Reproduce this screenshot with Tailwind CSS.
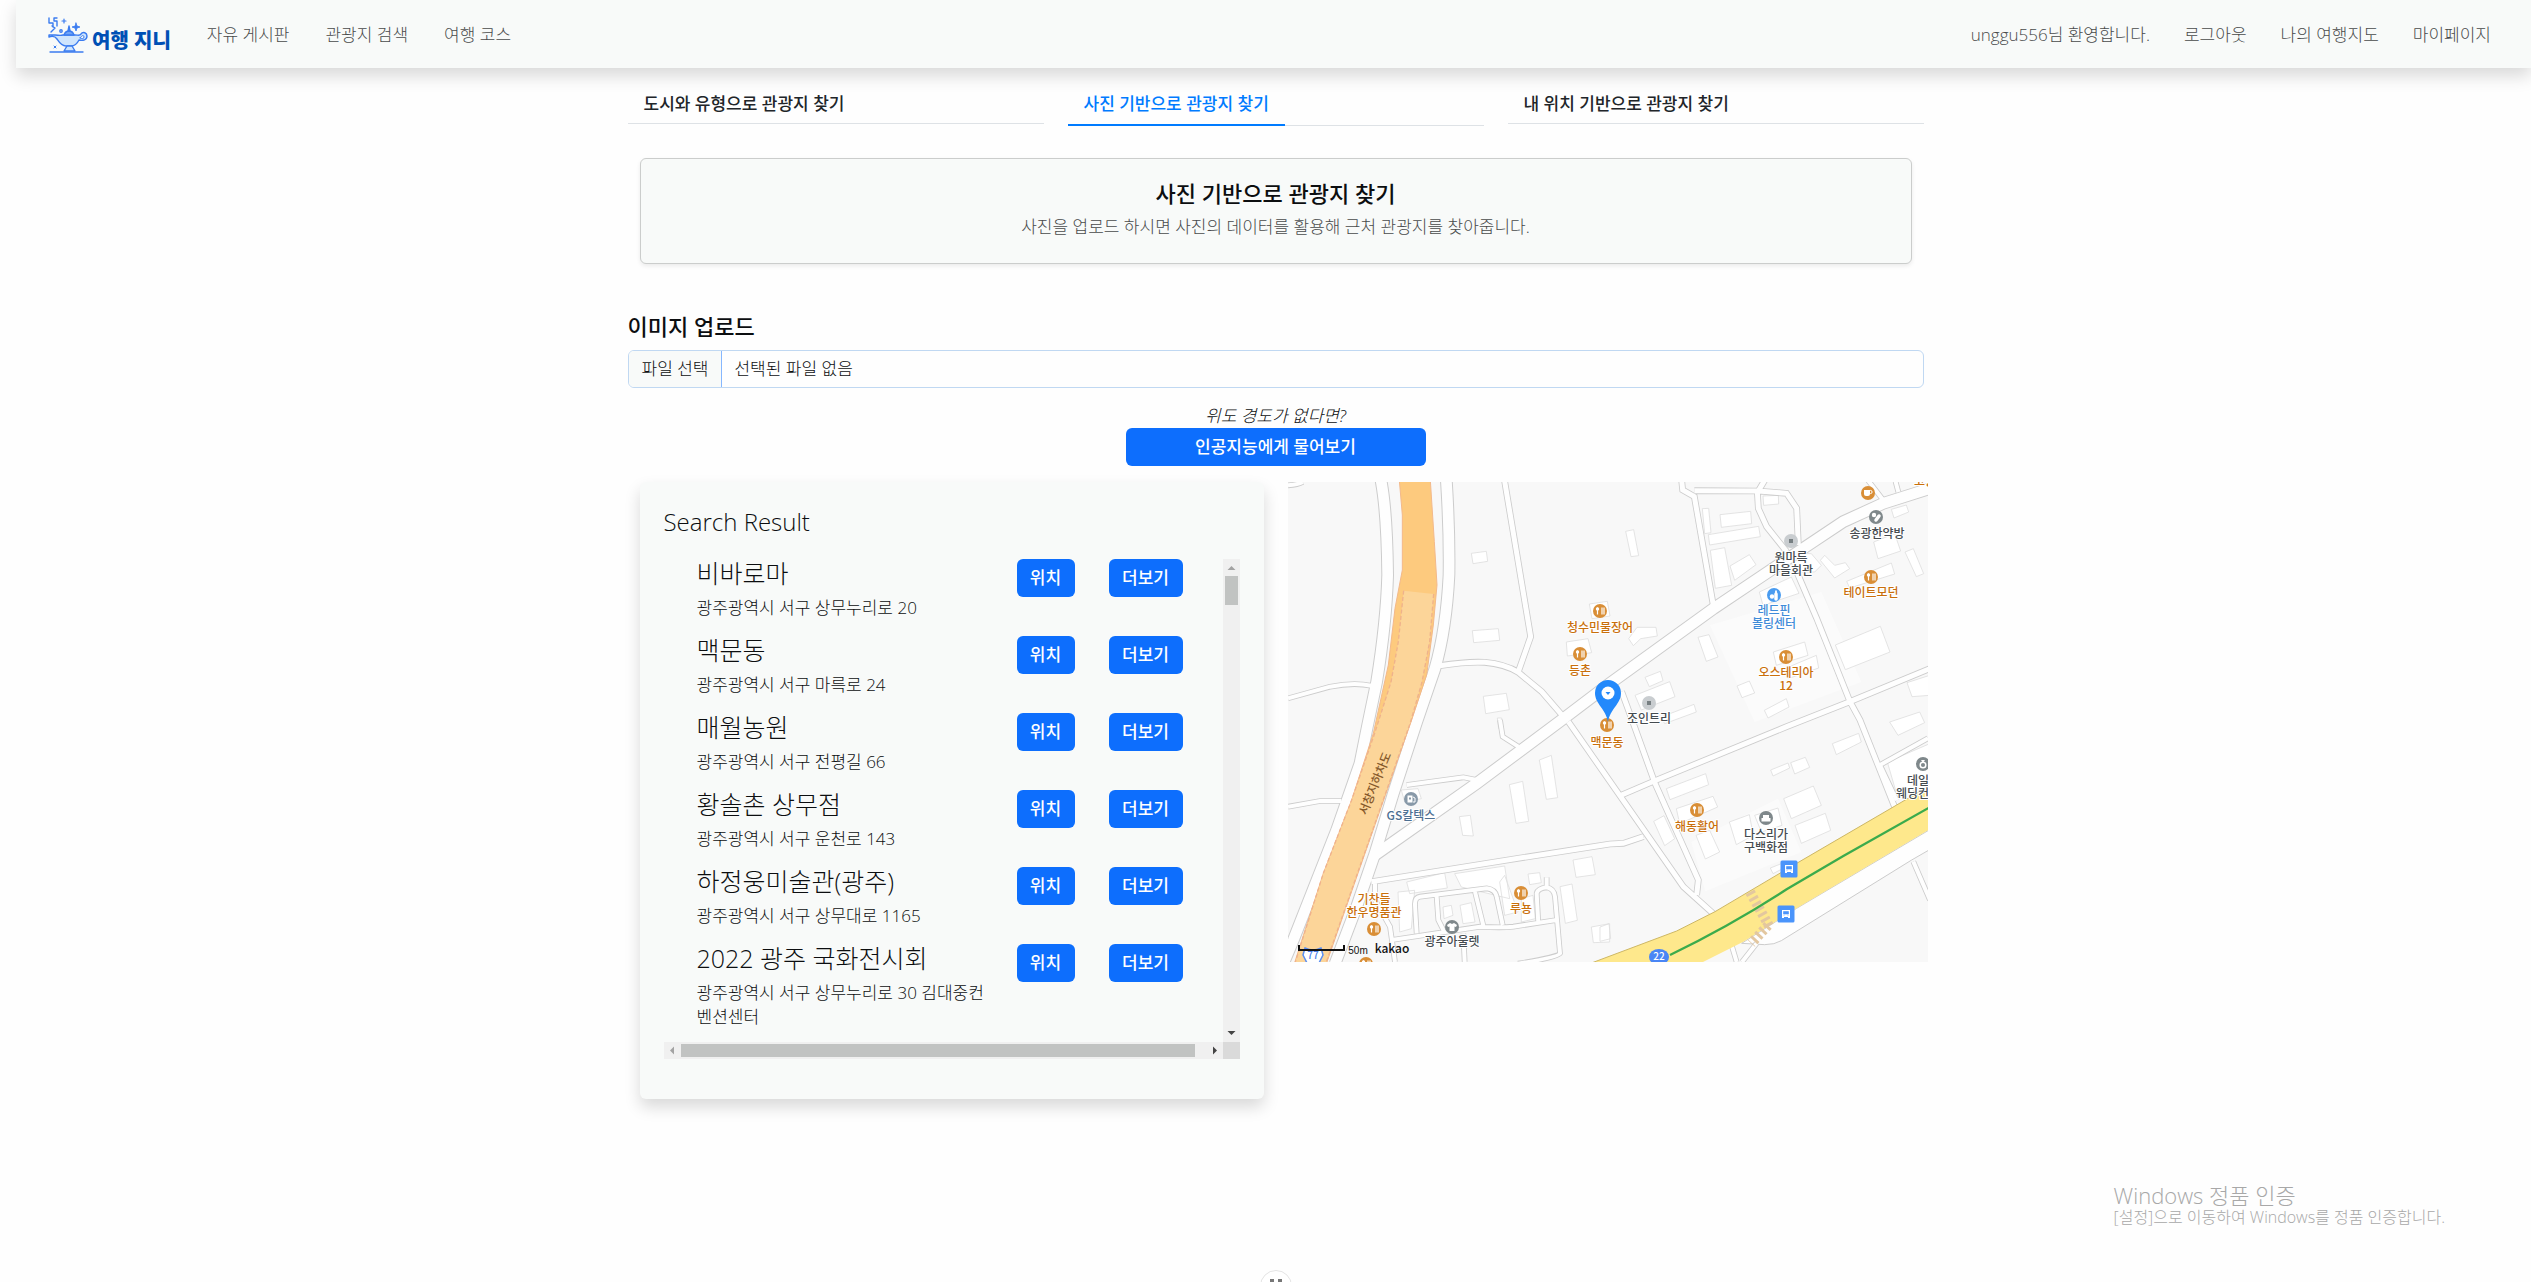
<!DOCTYPE html>
<html lang="ko">
<head>
<meta charset="utf-8">
<title>여행 지니</title>
<script src="https://cdn.jsdelivr.net/npm/@tailwindcss/browser@4"></script>
</head>
<body class="relative min-h-screen overflow-x-hidden bg-[#fefefe] pl-4 font-['Open_Sans','Noto_Sans_CJK_KR',sans-serif] text-[17px] leading-6 font-light text-[#0c0e10]">

<header class="flex h-[68px] items-center justify-between bg-[#f8faf9] pt-0.5 pr-10 pl-8 shadow-[0_8px_16px_rgba(0,0,0,0.15)]">
  <nav class="flex items-center gap-9 text-[#484a4b]">
    <a href="#" class="flex items-end gap-1 text-[#0050b5]">
      <svg class="h-9 w-10" viewBox="0 0 40 36" fill="none" stroke="#3b7cf0" stroke-width="1.4" stroke-linejoin="round" stroke-linecap="round">
        <path d="M1 1v5h4v4M9 1H6v3h3v5M3 15l4-4-3-2"/>
        <path d="M16 2v4M14 4h4" stroke-width="1.2"/>
        <path d="M28 6l1 3 3 1-3 1-1 3-1-3-3-1 3-1z" fill="#3b7cf0" stroke-width=".8"/>
        <circle cx="13" cy="14" r="1.200"/>
        <path d="M1 18h6c3 0 5 1 8 0h12c3 0 5 1 6-1 2-3 6-1 6 2 0 4-4 5-8 4-2 4-5 6-8 6h-5c-5 0-7-4-9-7-2-3-5-3-8-2z" fill="#cfe5fd"/>
        <path d="M33 20c1-2 3-2 3 0s-2 2-4 1z" fill="#f8faf9" stroke-width="1"/>
        <path d="M16 18c1-3 3-4 5-4s4 1 5 4z" fill="#6fa3f6"/>
        <path d="M20 14l1-5 1 5z"/>
        <path d="M19 29l-3 5h11l-3-5z" fill="#cfe5fd"/>
        <path d="M2 35h33"/>
        <path d="M6 29l2 2M8 29l-2 2" stroke-width="1"/>
      </svg>
      <span class="text-[20px] leading-6 font-black">여행 지니</span>
    </a>
    <a href="#">자유 게시판</a>
    <a href="#">관광지 검색</a>
    <a href="#">여행 코스</a>
  </nav>
  <nav class="flex items-center gap-[34px] text-[#484a4b]">
    <span>unggu556님 환영합니다.</span>
    <a href="#">로그아웃</a>
    <a href="#">나의 여행지도</a>
    <a href="#">마이페이지</a>
  </nav>
</header>

<main class="mx-auto w-full max-w-[1296px] translate-x-0.5 pt-6">
  <nav class="grid grid-cols-3 items-start gap-6 font-medium text-[#212529]">
    <div class="flex border-b border-[#dee2e6]"><a href="#" class="px-4 pb-[7px]">도시와 유형으로 관광지 찾기</a></div>
    <div class="flex border-b border-[#dee2e6]"><a href="#" class="-mb-px border-b-2 border-[#007bff] px-4 pb-2 text-[#007bff]">사진 기반으로 관광지 찾기</a></div>
    <div class="flex border-b border-[#dee2e6]"><a href="#" class="px-4 pb-[7px]">내 위치 기반으로 관광지 찾기</a></div>
  </nav>

  <section class="mx-3 mt-8 flex h-[106px] flex-col items-center gap-2 rounded-md border border-[#cbcdcc] bg-[#f8faf9] pt-5 shadow-[0_2px_4px_rgba(0,0,0,0.08)]">
    <h1 class="text-[22px] leading-7 font-medium">사진 기반으로 관광지 찾기</h1>
    <p class="text-[#484a4b]">사진을 업로드 하시면 사진의 데이터를 활용해 근처 관광지를 찾아줍니다.</p>
  </section>

  <section class="pt-12">
    <label for="photo" class="block text-[22px] leading-7 font-medium">이미지 업로드</label>
    <div class="relative mt-2.5 flex h-[38px] items-center overflow-hidden rounded-md border border-[#c0d8f2]">
      <span class="flex h-full items-center border-r border-[#86b7fe] bg-[#f8faf9] px-[13px]">파일 선택</span>
      <span class="px-3">선택된 파일 없음</span>
      <input id="photo" type="file" class="absolute inset-0 opacity-0">
    </div>
    <div class="mt-4 flex flex-col items-center">
      <em>위도 경도가 없다면?</em>
      <button type="button" class="h-[38px] w-[300px] rounded-md bg-[#0d6efd] font-medium text-white">인공지능에게 물어보기</button>
    </div>
  </section>

  <div class="-mr-1 ml-3 mt-4 flex items-start gap-6">
    <section class="h-[617px] min-w-0 flex-1 rounded-md bg-[#f8faf9] px-6 pt-6 shadow-[0_8px_16px_rgba(0,0,0,0.15)]">
      <h2 class="text-2xl leading-8">Search Result</h2>
      <div class="mt-[21px] grid h-[500px] grid-cols-[1fr_17px] grid-rows-[1fr_17px]">
        <ul class="flex flex-col gap-4 pl-[33px]">
          <li class="flex items-start">
            <div class="mr-6 w-[296px]"><h3 class="mb-2 text-[25px] leading-[29px]">비바로마</h3><p>광주광역시 서구 상무누리로 20</p></div>
            <button type="button" class="mr-[34px] h-[38px] w-[58px] rounded-md bg-[#0d6efd] font-medium text-white">위치</button>
            <button type="button" class="h-[38px] w-[74px] rounded-md bg-[#0d6efd] font-medium text-white">더보기</button>
          </li>
          <li class="flex items-start">
            <div class="mr-6 w-[296px]"><h3 class="mb-2 text-[25px] leading-[29px]">맥문동</h3><p>광주광역시 서구 마륵로 24</p></div>
            <button type="button" class="mr-[34px] h-[38px] w-[58px] rounded-md bg-[#0d6efd] font-medium text-white">위치</button>
            <button type="button" class="h-[38px] w-[74px] rounded-md bg-[#0d6efd] font-medium text-white">더보기</button>
          </li>
          <li class="flex items-start">
            <div class="mr-6 w-[296px]"><h3 class="mb-2 text-[25px] leading-[29px]">매월농원</h3><p>광주광역시 서구 전평길 66</p></div>
            <button type="button" class="mr-[34px] h-[38px] w-[58px] rounded-md bg-[#0d6efd] font-medium text-white">위치</button>
            <button type="button" class="h-[38px] w-[74px] rounded-md bg-[#0d6efd] font-medium text-white">더보기</button>
          </li>
          <li class="flex items-start">
            <div class="mr-6 w-[296px]"><h3 class="mb-2 text-[25px] leading-[29px]">황솔촌 상무점</h3><p>광주광역시 서구 운천로 143</p></div>
            <button type="button" class="mr-[34px] h-[38px] w-[58px] rounded-md bg-[#0d6efd] font-medium text-white">위치</button>
            <button type="button" class="h-[38px] w-[74px] rounded-md bg-[#0d6efd] font-medium text-white">더보기</button>
          </li>
          <li class="flex items-start">
            <div class="mr-6 w-[296px]"><h3 class="mb-2 text-[25px] leading-[29px]">하정웅미술관(광주)</h3><p>광주광역시 서구 상무대로 1165</p></div>
            <button type="button" class="mr-[34px] h-[38px] w-[58px] rounded-md bg-[#0d6efd] font-medium text-white">위치</button>
            <button type="button" class="h-[38px] w-[74px] rounded-md bg-[#0d6efd] font-medium text-white">더보기</button>
          </li>
          <li class="flex items-start">
            <div class="mr-6 w-[296px]"><h3 class="mb-2 text-[25px] leading-[29px]">2022 광주 국화전시회</h3><p>광주광역시 서구 상무누리로 30 김대중컨벤션센터</p></div>
            <button type="button" class="mr-[34px] h-[38px] w-[58px] rounded-md bg-[#0d6efd] font-medium text-white">위치</button>
            <button type="button" class="h-[38px] w-[74px] rounded-md bg-[#0d6efd] font-medium text-white">더보기</button>
          </li>
        </ul>
        <div class="flex flex-col items-center justify-between bg-[#f0f0f0]">
          <div class="flex flex-col items-center">
            <svg class="h-[17px] w-[17px]" viewBox="0 0 17 17" fill="#a3a3a3"><path d="M4.500 11h8l-4-4z"/></svg>
            <div class="h-[29px] w-[13px] bg-[#c1c3c2]"></div>
          </div>
          <svg class="h-[17px] w-[17px]" viewBox="0 0 17 17" fill="#444"><path d="M4.500 6h8l-4 4z"/></svg>
        </div>
        <div class="flex items-center justify-between bg-[#f0f0f0]">
          <div class="flex min-w-0 flex-1 items-center">
            <svg class="h-[17px] w-[17px]" viewBox="0 0 17 17" fill="#a3a3a3"><path d="M10 4.500v8l-4-4z"/></svg>
            <div class="h-[13px] w-[514px] bg-[#c1c3c2]"></div>
          </div>
          <svg class="h-[17px] w-[17px]" viewBox="0 0 17 17" fill="#444"><path d="M7 4.500v8l4-4z"/></svg>
        </div>
        <div class="bg-[#dadada]"></div>
      </div>
    </section>

    <section class="relative h-[480px] w-[640px] shrink-0 overflow-hidden bg-[#f8f8f8]" aria-label="지도">
      <svg class="absolute inset-0 h-full w-full" viewBox="0 0 1920 1440" fill="none">
        <defs>
          <g id="narrow">
            <path d="M0 649 126 614Q196 600 250 611M0 974 96 957H160"/>
            <path d="M356 909 526 886 566 894M636 714 644 764 691 794"/>
            <path d="M386 1354 381 1269Q380 1246 396 1244L596 1219Q622 1222 626 1244L644 1329M311 1374 576 1334Q640 1338 676 1334L806 1314M446 1244 451 1314 471 1354M561 1229 588 1339M751 1324 746 1234Q750 1219 776 1216 798 1220 801 1244L816 1414Q812 1425 690 1445M261 1204V1254L306 1334 321 1440M526 1354 530 1440M776 1218V1186"/>
            <path d="M0 10Q30 8 44 0M1822-4 1831 30M1740-5 1790 60"/>
            <path d="M1776 849 1920 769M1776 849 1826 955M1876 1139 1926 1254M1331 1390 1346 1440M1406 1384 1362 1440"/>
          </g>
          <g id="medium">
            <path d="M650-2 728 464 691 569M455 551Q540 538 590 541 650 546 691 571L761 629 826 704"/>
            <path d="M1181-5 1184 24 1219 44 1276 370M1219 26 1411 27 1496 34 1526 79 1531 189M1411 27 1430-5M1408 29 1411 79 1436 134 1496 209"/>
            <path d="M1526 269 1586 409 1686 659 1716 714 1822 980M1925 560 1686 659 1496 734 1106 894 1001 939"/>
            <path d="M841 719 1186 1214 1286 1304M1001 629 1036 724 1101 904 1231 1194 1226 1239M250 1199 626 1139 966 1086 1006 1084 1066 1064"/>
          </g>
          <g id="wide">
            <path d="M279-5Q297 90 299 279 295 420 266 599L238 734 216 844 146 1044 16 1374-14 1445"/>
            <path d="M475-5Q485 150 483 279 475 440 441 559L386 720 316 934 261 1114 206 1274 141 1445"/>
            <path d="M1925 20 1786 64 1666 119 1546 199 1276 380 966 604 821 714 566 904 261 1119"/>
          </g>
        </defs>
        <path d="M1266 430 1600 330 1720 600 1400 720ZM1210 1080 1470 950 1540 1110 1252 1228Z" fill="#fbfbfb"/>
        <!-- building footprints -->
        <g fill="#fff" stroke="#dedede" stroke-width="2.500">
          <path d="M550 214 595 208 599 238 555 245ZM553 446 631 440 635 475 557 482ZM586 643 655 634 664 683 593 695ZM904 366 958 358 966 402 912 410ZM835 480 900 470 911 512 838 522ZM628 708 641 708 645 740 632 740Z"/>
          <path d="M1013 148 1037 143 1052 221 1029 224ZM1243 80 1262 79 1269 152 1250 155ZM1296 98 1388 88 1391 125 1300 136ZM1261 158 1412 133 1417 164 1265 189ZM1267 205 1310 197 1331 310 1282 319ZM1326 252 1384 218 1404 248 1340 295ZM1425 42 1471 40 1472 66 1427 70ZM1810 82 1855 69 1862 90 1818 108ZM1851 210 1876 200 1907 275 1885 284ZM1757 180 1820 155 1838 207 1770 230ZM1676 298 1810 243 1820 276 1685 318ZM1597 235 1610 220 1640 250 1672 242 1685 260 1640 288ZM1500 215 1570 215 1600 250 1580 270 1520 270Z"/>
          <path d="M1642 489 1777 433 1806 510 1672 563ZM1414 330 1510 285 1533 334 1425 370ZM1456 510 1550 480 1560 520 1465 550ZM1490 560 1585 520 1592 558 1500 590ZM1230 466 1263 458 1290 525 1255 538ZM1022 470 1047 436 1104 436 1108 462 1058 470 1036 491ZM1071 586 1117 568 1125 596 1084 614ZM1041 640 1145 599 1161 644 1060 684ZM1120 705 1218 667 1225 690 1130 725ZM1347 612 1384 597 1400 633 1362 647ZM1429 685 1495 650 1503 675 1440 708ZM1857 602 1925 580V640L1872 644ZM1805 720 1895 690 1910 722 1830 760Z"/>
          <path d="M754 834 790 820 809 947 775 952ZM664 908 704 898 722 1018 684 1024ZM514 1004 547 1000 556 1062 524 1060ZM340 924 390 920 400 950 350 960ZM356 1200 470 1172 478 1218 365 1235ZM500 1175 650 1152 665 1250 520 1215ZM330 1230 380 1225 370 1340 335 1350ZM650 1180 690 1290 650 1300 635 1200ZM720 1176 755 1172 760 1202 725 1208ZM855 1134 912 1124 922 1178 864 1186ZM816 1214 852 1206 868 1315 832 1324ZM910 1335 965 1325V1380L916 1382ZM700 1250 735 1240 742 1310 700 1320ZM465 1275 490 1270 495 1300 468 1310ZM516 1270 550 1262 561 1320 525 1325ZM936 1335 963 1325 968 1370 936 1378Z"/>
          <path d="M1135 920 1253 875 1262 908 1146 953ZM1165 980 1275 943 1289 975 1175 1025ZM1097 1018 1128 1001 1160 1070 1130 1091ZM1224 1060 1265 1045 1295 1110 1252 1131ZM1324 1020 1384 998 1396 1060 1345 1088ZM1400 1000 1470 978 1482 1030 1420 1050ZM1487 950 1576 912 1600 970 1510 1010ZM1521 1030 1612 994 1628 1045 1540 1084ZM1448 864 1500 843 1505 858 1455 882ZM1508 842 1552 826 1565 856 1520 876ZM1633 785 1712 754 1720 780 1645 818ZM1798 840 1925 785V900L1830 950ZM1447 1158 1480 1145 1484 1160 1455 1175Z"/>
        </g>
        <path d="M1930 1040 1526 1279 1361 1384 1430 1388Q1460 1388 1480 1376L1871 1134 1930 1100" fill="#fefefe" stroke="#ccc" stroke-width="3"/>
        <g stroke="#ccc"><use href="#narrow" stroke-width="17"/><use href="#medium" stroke-width="20"/><use href="#wide" stroke-width="38"/></g>
        <g stroke="#fefefe"><use href="#narrow" stroke-width="12"/><use href="#medium" stroke-width="15"/><use href="#wide" stroke-width="32"/></g>
        <!-- expressway -->
        <path d="M334-5 343 99V264L321 379 301 549 256 754 191 954 106 1174 19 1445H115L371 714 416 579 436 429 447 309 439 179 427-5Z" fill="#fdca7e" stroke="#f3b98a" stroke-width="3"/>
        <path d="M347 326 437 336 425 479 402 600 367 722 115 1440H22L106 1174 191 954 260 754 309 600 331 479Z" fill="#fcd599"/>
        <path d="M347 326 331 479 309 600 260 754 191 954 106 1174 22 1440M437 336 425 479 402 600 367 722 115 1440" stroke="#efb28c" stroke-width="4" stroke-dasharray="12 7"/>
        <!-- boulevard and metro line -->
        <path d="M905 1445 1166 1347 1281 1289 1526 1144 1826 969 1925 911V1042L1526 1279 1366 1379 1235 1445Z" fill="#fee88c"/>
        <path d="M905 1445 1166 1347 1281 1289 1526 1144 1826 969 1925 911" stroke="#cdb765" stroke-width="3"/>
        <path d="M1386 1230 1445 1335M1440 1330 1390 1384" stroke="#e3c79f" stroke-width="30" stroke-dasharray="9 9"/>
        <path d="M1925 976 1666 1122 1496 1222Q1330 1330 1146 1419" stroke="#3bab4c" stroke-width="7"/>
      </svg>

      <svg class="absolute inset-0 h-full w-full font-['Noto_Sans_CJK_KR',sans-serif] text-xs font-medium" viewBox="0 0 640 480" text-anchor="middle">
        <defs>
          <g id="food"><circle r="7" fill="#d98e36"/><path d="M-2.500-3.500v7M2-3.500v7M4-3.500v7" stroke="#fff" stroke-width="1.200"/><circle cx="-2.500" cy="-2" r="1.700" fill="#fff"/></g>
          <g id="spot"><circle r="7" fill="#c9cdd0"/><rect x="-2" y="-2" width="4" height="4" fill="#777f82"/></g>
          <g id="bus"><rect x="-8.500" y="-8.500" width="17" height="17" rx="1.500" fill="#4a94fb"/><path d="M-4-4h8v8h-2v-1h-4v1h-2z" fill="#fff"/><path d="M-2.500-2.500h5v2.500h-5zM-2.500 1.200h1M1.500 1.200h1" fill="#4a94fb" stroke="#4a94fb" stroke-width=".6"/></g>
        </defs>
        <use href="#food" x="312" y="129"/><use href="#food" x="292" y="172"/><use href="#food" x="319" y="243"/><use href="#food" x="583" y="95"/><use href="#food" x="498" y="175"/><use href="#food" x="86" y="447"/><use href="#food" x="78" y="482"/><use href="#food" x="233" y="411"/><use href="#food" x="409" y="328"/>
        <use href="#spot" x="503" y="59"/><use href="#spot" x="361" y="221"/>
        <g transform="translate(580 11)"><circle r="7" fill="#d98e36"/><path d="M-4-3h6v4q0 2-2 2h-2q-2 0-2-2z" fill="#fff"/><circle cx="2.500" cy="-1" r="1.600" fill="none" stroke="#fff"/></g>
        <g transform="translate(588 35)"><circle r="7" fill="#7f888b"/><circle cx="-2" cy="-2" r="2.200" fill="#fff"/><path d="M0 3 3-1" stroke="#fff" stroke-width="3.500" stroke-linecap="round"/></g>
        <g transform="translate(486 113)"><circle r="7" fill="#4a9cf0"/><circle cx="-2" cy="1.500" r="2.200" fill="#fff"/><path d="M2-1v5" stroke="#fff" stroke-width="3.500" stroke-linecap="round"/><path d="M2-4.500v3" stroke="#fff" stroke-width="1.800"/></g>
        <g transform="translate(123 317)"><circle r="7" fill="#8899a8"/><path d="M-3.500-3.500h5v7h-5z" fill="#fff"/><path d="M-2-1.500h2v2h-2z" fill="#8899a8"/><path d="M2-2l2 1v4H2" fill="none" stroke="#fff"/></g>
        <g transform="translate(164 445)"><circle r="7" fill="#7f888b"/><path d="M-2-4 0-3 2-4 5-2 4 0 2.500-.5V4h-5V-.5L-4 0-5-2z" fill="#fff"/></g>
        <g transform="translate(478 336)"><circle r="7" fill="#7f888b"/><path d="M-3-3h6v3h1.500v3.500h-9V0H-3z" fill="#fff"/></g>
        <g transform="translate(635 282)"><circle r="7" fill="#7f888b"/><circle cy="1" r="2.800" fill="none" stroke="#fff" stroke-width="1.500"/><path d="M-2-4h4L0-1z" fill="#fff"/></g>
        <use href="#bus" x="501" y="387"/><use href="#bus" x="498" y="432"/>
        <ellipse cx="371" cy="475" rx="10" ry="8" fill="#4a86f5"/>
        <path d="M17 466q8 4 16 0l2 7-4 8H19l-4-8z" fill="#fff" stroke="#5b8ef0" stroke-width="1.500"/>
        <g stroke="#fff" stroke-width="2" paint-order="stroke" stroke-linejoin="round">
          <g fill="#c96f0b">
            <text x="312" y="150">청수민물장어</text><text x="292" y="193">등촌</text><text x="319" y="265">맥문동</text>
            <text x="583" y="115">테이트모던</text><text x="498" y="195">오스테리아</text><text x="498" y="208">12</text>
            <text x="86" y="422">기찬들</text><text x="86" y="435">한우명품관</text><text x="233" y="431">루뇽</text><text x="409" y="349">해동활어</text><text x="637" y="4">고등</text>
          </g>
          <g fill="#454b50">
            <text x="361" y="241">조인트리</text><text x="503" y="80">원마륵</text><text x="503" y="93">마을회관</text><text x="589" y="56">송광한약방</text>
            <text x="164" y="464">광주아울렛</text><text x="478" y="357">다스리가</text><text x="478" y="370">구백화점</text>
            <text x="619" y="303" text-anchor="start">데일</text><text x="608" y="316" text-anchor="start">웨딩컨</text>
          </g>
          <text x="123" y="338" fill="#4c6f92">GS칼텍스</text>
          <g fill="#3f8bd8"><text x="486" y="133">레드핀</text><text x="486" y="146">볼링센터</text></g>
        </g>
        <text transform="translate(91 303) rotate(-68)" fill="#85582a">서창지하차도</text>
        <text x="371" y="478" fill="#fff" class="text-[10px]">22</text>
        <text x="25" y="477" fill="#4a80e8" class="text-[10px]">77</text>
        <path d="M11 463v5h45v-5" fill="none" stroke="#111" stroke-width="2"/>
        <text x="70" y="472" fill="#111" class="font-['Liberation_Sans',sans-serif] text-[10px]">50m</text>
        <text x="104" y="471" fill="#111">kakao</text>
        <path d="M320 240C318 227 307 222 307 211a13 13 0 0 1 26 0C333 222 322 227 320 240z" fill="#2389fb"/><circle cx="320" cy="211" r="6.500" fill="#fff"/><path d="M317.500 210h5l-2.500 3z" fill="#2389fb"/>
      </svg>
    </section>
  </div>
</main>

<aside class="absolute right-[86px] bottom-[54px] text-[#a8a8a8]">
  <p class="text-[22px] leading-6">Windows 정품 인증</p>
  <p class="text-base leading-[21px]">[설정]으로 이동하여 Windows를 정품 인증합니다.</p>
</aside>

<div class="absolute inset-x-0 bottom-0 flex h-3 translate-x-2.5 justify-center overflow-hidden">
  <div class="flex h-8 w-8 justify-center gap-1 rounded-full border border-[#e4e4e4] bg-white pt-2">
    <span class="h-1 w-1 bg-[#777]"></span><span class="h-1 w-1 bg-[#777]"></span>
  </div>
</div>
</body>
</html>
